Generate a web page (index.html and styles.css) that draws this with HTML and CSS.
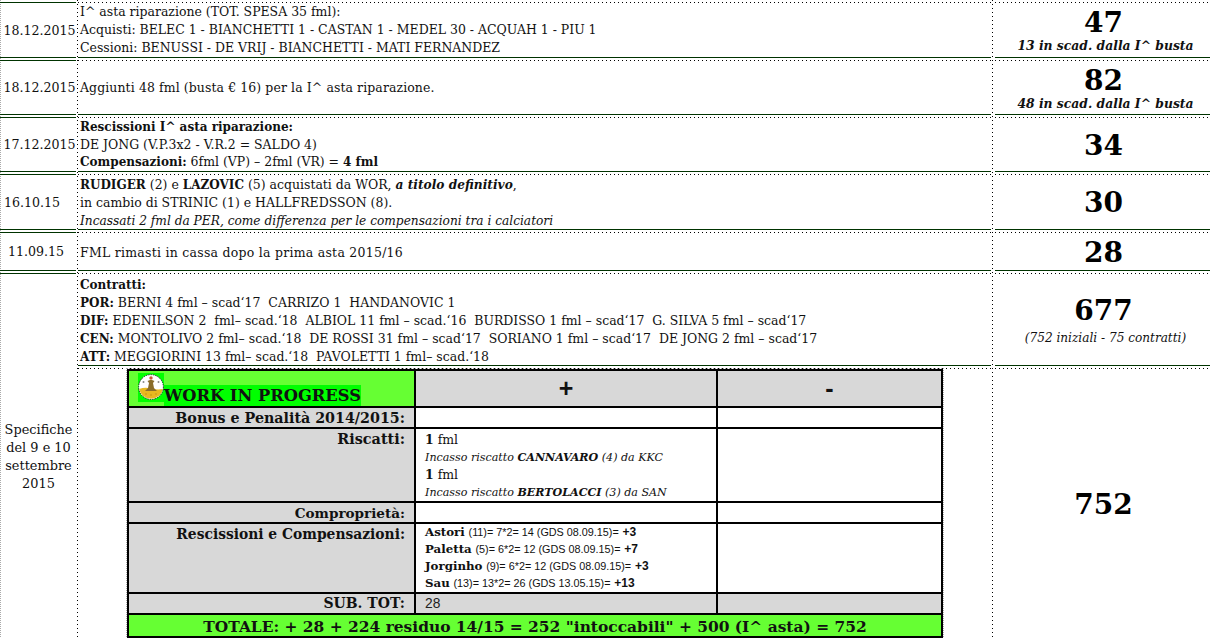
FILE: index.html
```html
<!DOCTYPE html>
<html lang="it">
<head>
<meta charset="utf-8">
<title>Bilancio FML</title>
<link rel="stylesheet" href="styles.css">
</head>
<body>
<main class="sheet">
  <div class="date">18.12.2015</div>
  <div class="main"><p>I^ asta riparazione (TOT. SPESA 35 fml):</p><p>Acquisti: BELEC 1 - BIANCHETTI 1 - CASTAN 1 - MEDEL 30 - ACQUAH 1 - PIU 1</p><p>Cessioni: BENUSSI - DE VRIJ - BIANCHETTI - MATI FERNANDEZ</p></div>
  <div class="total"><strong class="num">47</strong><em class="note">13 in scad. dalla I^ busta</em></div>

  <div class="date">18.12.2015</div>
  <div class="main"><p class="sp1">Aggiunti 48 fml (busta € 16) per la I^ asta riparazione.</p></div>
  <div class="total"><strong class="num">82</strong><em class="note">48 in scad. dalla I^ busta</em></div>

  <div class="date">17.12.2015</div>
  <div class="main tight"><p><b>Rescissioni I^ asta riparazione:</b></p><p>DE JONG (V.P.3x2 - V.R.2 = SALDO 4)</p><p><b>Compensazioni:</b> 6fml (VP) – 2fml (VR) = <b>4 fml</b></p></div>
  <div class="total mid"><strong class="num">34</strong></div>

  <div class="date far">16.10.15</div>
  <div class="main semi"><p><b>RUDIGER</b> (2) e <b>LAZOVIC</b> (5) acquistati da WOR, <b><i>a titolo definitivo</i></b>,</p><p>in cambio di STRINIC (1) e HALLFREDSSON (8).</p><p><i>Incassati 2 fml da PER, come differenza per le compensazioni tra i calciatori</i></p></div>
  <div class="total mid"><strong class="num">30</strong></div>

  <div class="date near">11.09.15</div>
  <div class="main nudge"><p class="sp2">FML rimasti in cassa dopo la prima asta 2015/16</p></div>
  <div class="total low"><strong class="num">28</strong></div>

  <div class="date spec">Specifiche del 9 e 10 settembre 2015</div>
  <div class="main nudge"><p><b>Contratti:</b></p><p><b>POR:</b> BERNI 4 fml – scad‘17&nbsp; CARRIZO 1&nbsp; HANDANOVIC 1</p><p><b>DIF:</b> EDENILSON 2&nbsp; fml– scad.‘18&nbsp; ALBIOL 11 fml – scad.‘16&nbsp; BURDISSO 1 fml – scad‘17&nbsp; G. SILVA 5 fml – scad‘17</p><p><b>CEN:</b> MONTOLIVO 2 fml– scad.‘18&nbsp; DE ROSSI 31 fml – scad‘17&nbsp; SORIANO 1 fml – scad‘17&nbsp; DE JONG 2 fml – scad‘17</p><p><b>ATT:</b> MEGGIORINI 13 fml– scad.‘18&nbsp; PAVOLETTI 1 fml– scad.‘18</p></div>
  <div class="total lower"><strong class="num">677</strong><em class="note plain">(752 iniziali - 75 contratti)</em></div>

  <div class="main wip">
    <table class="bal">
      <colgroup><col class="c1"><col class="c2"><col class="c3"></colgroup>
      <tr class="h1">
        <th class="lime left"><span class="wiptitle"><svg class="logo" viewBox="0 0 26 29" aria-hidden="true"><rect width="26" height="29" fill="#00ff00"/><circle cx="13" cy="14" r="12.4" fill="#fff" stroke="#222" stroke-width="1" stroke-dasharray="1.4 1"/><path d="M1.2 16 Q7 14 13 15.5 T24.8 16 A12 12 0 0 1 1.2 16Z" fill="#e8b820"/><path d="M7 18 L19 18 L16 15 L15 10 L16.5 8 L14 7 L12 7 L9.5 8 L11 10 L10 15Z" fill="#8a6d2a"/><circle cx="13" cy="5" r="1.7" fill="#c8553a"/><circle cx="5.5" cy="9" r="1" fill="#888"/><circle cx="20.5" cy="9" r="1" fill="#888"/><circle cx="8" cy="21" r=".7" fill="#b98a10"/><circle cx="13" cy="22" r=".7" fill="#b98a10"/><circle cx="18" cy="21" r=".7" fill="#b98a10"/></svg><span class="hl">WORK IN PROGRESS</span></span></th>
        <th class="sign">+</th>
        <th class="sign">-</th>
      </tr>
      <tr class="h2"><th class="lab wide">Bonus e Penalità 2014/2015:</th><td></td><td></td></tr>
      <tr class="h3"><th class="lab wider">Riscatti:</th><td class="det"><p><b>1</b> fml</p><p class="sm"><i>Incasso riscatto <b>CANNAVARO</b> (4) da KKC</i></p><p><b>1</b> fml</p><p class="sm"><i>Incasso riscatto <b>BERTOLACCI</b> (3) da SAN</i></p></td><td></td></tr>
      <tr class="h2"><th class="lab nar2">Comproprietà:</th><td></td><td></td></tr>
      <tr class="h4"><th class="lab nar">Rescissioni e Compensazioni:</th><td class="det resc"><p><b>Astori</b> <small>(11)= 7*2= 14 (GDS 08.09.15)=</small> <b class="plus">+3</b></p><p><b>Paletta</b> <small>(5)= 6*2= 12 (GDS 08.09.15)=</small> <b class="plus">+7</b></p><p><b>Jorginho</b> <small>(9)= 6*2= 12 (GDS 08.09.15)=</small> <b class="plus">+3</b></p><p><b>Sau</b> <small>(13)= 13*2= 26 (GDS 13.05.15)=</small> <b class="plus">+13</b></p></td><td></td></tr>
      <tr class="h2 grey"><th class="lab flush">SUB. TOT:</th><td class="sub">28</td><td></td></tr>
      <tr class="h5"><th class="lime grand" colspan="3">TOTALE: + 28 + 224 residuo 14/15 = 252 "intoccabili" + 500 (I^ asta) = 752</th></tr>
    </table>
  </div>
  <div class="total last mid"><strong class="num">752</strong></div>
</main>
</body>
</html>
```
FILE: styles.css
```css
html, body { margin: 0; padding: 0; background: #fff; }
body { width: 1212px; height: 638px; overflow: hidden; }
.sheet {
  width: 1212px; height: 638px; padding-top: 2px; box-sizing: border-box;
  display: grid;
  grid-template-columns: 76px 913px 217px;
  grid-template-rows: 56px 55px 55px 56px 39px 93px 270px;
  column-gap: 2px; row-gap: 2px;
  font-family: "DejaVu Serif", "Liberation Serif", serif;
  font-size: 12.48px; color: #111;
  background-image:
    repeating-linear-gradient(to bottom, #000 0 1px, #fff 1px 4px),
    repeating-linear-gradient(to bottom, #000 0 1px, #fff 1px 4px),
    repeating-linear-gradient(to bottom, #aaa 0 1px, #fff 1px 2px);
  background-size: 1px 100%, 1px 100%, 1px 100%;
  background-position: 77px 0, 992px 0, 0 0;
  background-repeat: no-repeat;
}
p { margin: 0; }
.sheet > div { box-sizing: border-box; display: flex; flex-direction: column; justify-content: center; min-width: 0; }
.date { border-top: 1px solid #003300; border-bottom: 1px solid #003300; text-align: center; white-space: nowrap; padding-left: 3px; font-size: 12.6px; }
.sheet > .far { padding: 0 12px 0 0; }
.sheet > .near { padding: 0 4px 0 0; }
.main, .total {
  border-bottom: 1px solid #003300;
  padding-top: 1px;
  background-image: repeating-linear-gradient(to right, #000 0 1px, transparent 1px 4px);
  background-size: 100% 1px;
  background-position: 0 0;
  background-repeat: no-repeat;
}
.main { padding-left: 2px; }
.total { margin-left: 2px; padding-left: 2px; align-items: center; }
.main p { line-height: 18px; white-space: nowrap; }
.main b { font-size: 12px; }
.main i { font-size: 12.2px; }
.main.tight p { line-height: 17px; }
.main.semi { padding-top: 3px; }
.main.semi p { line-height: 17.6px; }
.main.nudge { padding-top: 3px; }
.sp1 { letter-spacing: .1px; }
.sp2 { letter-spacing: .27px; }
.num { font-size: 28px; font-weight: 700; line-height: 32px; color: #000; }
.note { font-weight: 700; font-size: 12.35px; line-height: 14px; margin-left: 4px; }
.note.plain { font-weight: 400; font-size: 12.1px; line-height: 22px; }
.mid { padding-top: 3px; }
.low { padding-top: 4px; }
.lower { padding-top: 6px; }
.sheet > .spec { grid-row: span 2; white-space: normal; border-bottom: 0; padding: 2px 0 0 1px; font-size: 12.9px; }
.spec { line-height: 18px; }
.sheet > .wip, .sheet > .last { border-bottom: 0; }
.sheet > .wip { justify-content: flex-start; padding-left: 49px; }
.bal { border-collapse: collapse; width: 814px; table-layout: fixed; border: 2px solid #000; outline: 1px dotted #aaa; }
.c1 { width: 287px; }
.c2 { width: 302px; }
.c3 { width: 225px; }
.bal th, .bal td { border: 2px solid #000; padding: 0; }
.bal th { background: #d8d8d8; }
.bal .lab { text-align: right; vertical-align: top; font-size: 14px; padding: 1px 9px 0 0; line-height: 18px; white-space: nowrap; }
.bal .wide { font-size: 14.25px; }
.bal .wider { font-size: 14.4px; }
.bal .nar { font-size: 13.85px; }
.bal .nar2 { font-size: 13.55px; }
.bal .flush { padding-top: 0; }
.h1 { height: 37px; }
.h2 { height: 21px; }
.h3 { height: 74px; }
.h4 { height: 70px; }
.h5 { height: 23px; }
.bal .lime { background: #66ff33; }
.bal .left { text-align: left; padding-left: 9px; vertical-align: bottom; }
.wiptitle { display: flex; align-items: flex-end; }
.logo { width: 26px; height: 29px; display: block; margin-bottom: 4px; }
.hl { background: #00ff00; font-size: 16.3px; line-height: 21px; display: block; white-space: nowrap; }
.sign { font-size: 25px; font-family: "Liberation Sans", sans-serif; }
.bal .det { vertical-align: top; padding: 2px 0 0 9px; }
.main .det b { font-size: inherit; }
.main .det i { font-size: inherit; }
.main .det p { line-height: 17.6px; white-space: nowrap; }
.main .det .sm { font-size: 11.1px; }
.bal .resc { padding-top: 0; }
.main .resc p { font-size: 11.8px; line-height: 17px; }
.resc small { font-family: "Liberation Sans", sans-serif; font-size: 10.8px; line-height: 1; }
.main .resc .plus { font-family: "Liberation Sans", sans-serif; font-size: 12px; line-height: 1; }
.bal .grey td { background: #d8d8d8; }
.bal .sub { padding-left: 9px; font-family: "Liberation Sans", sans-serif; font-size: 13.8px; color: #222; }
.bal .grand { font-size: 15.45px; text-align: center; line-height: 19px; white-space: nowrap; padding-top: 1px; }
```
